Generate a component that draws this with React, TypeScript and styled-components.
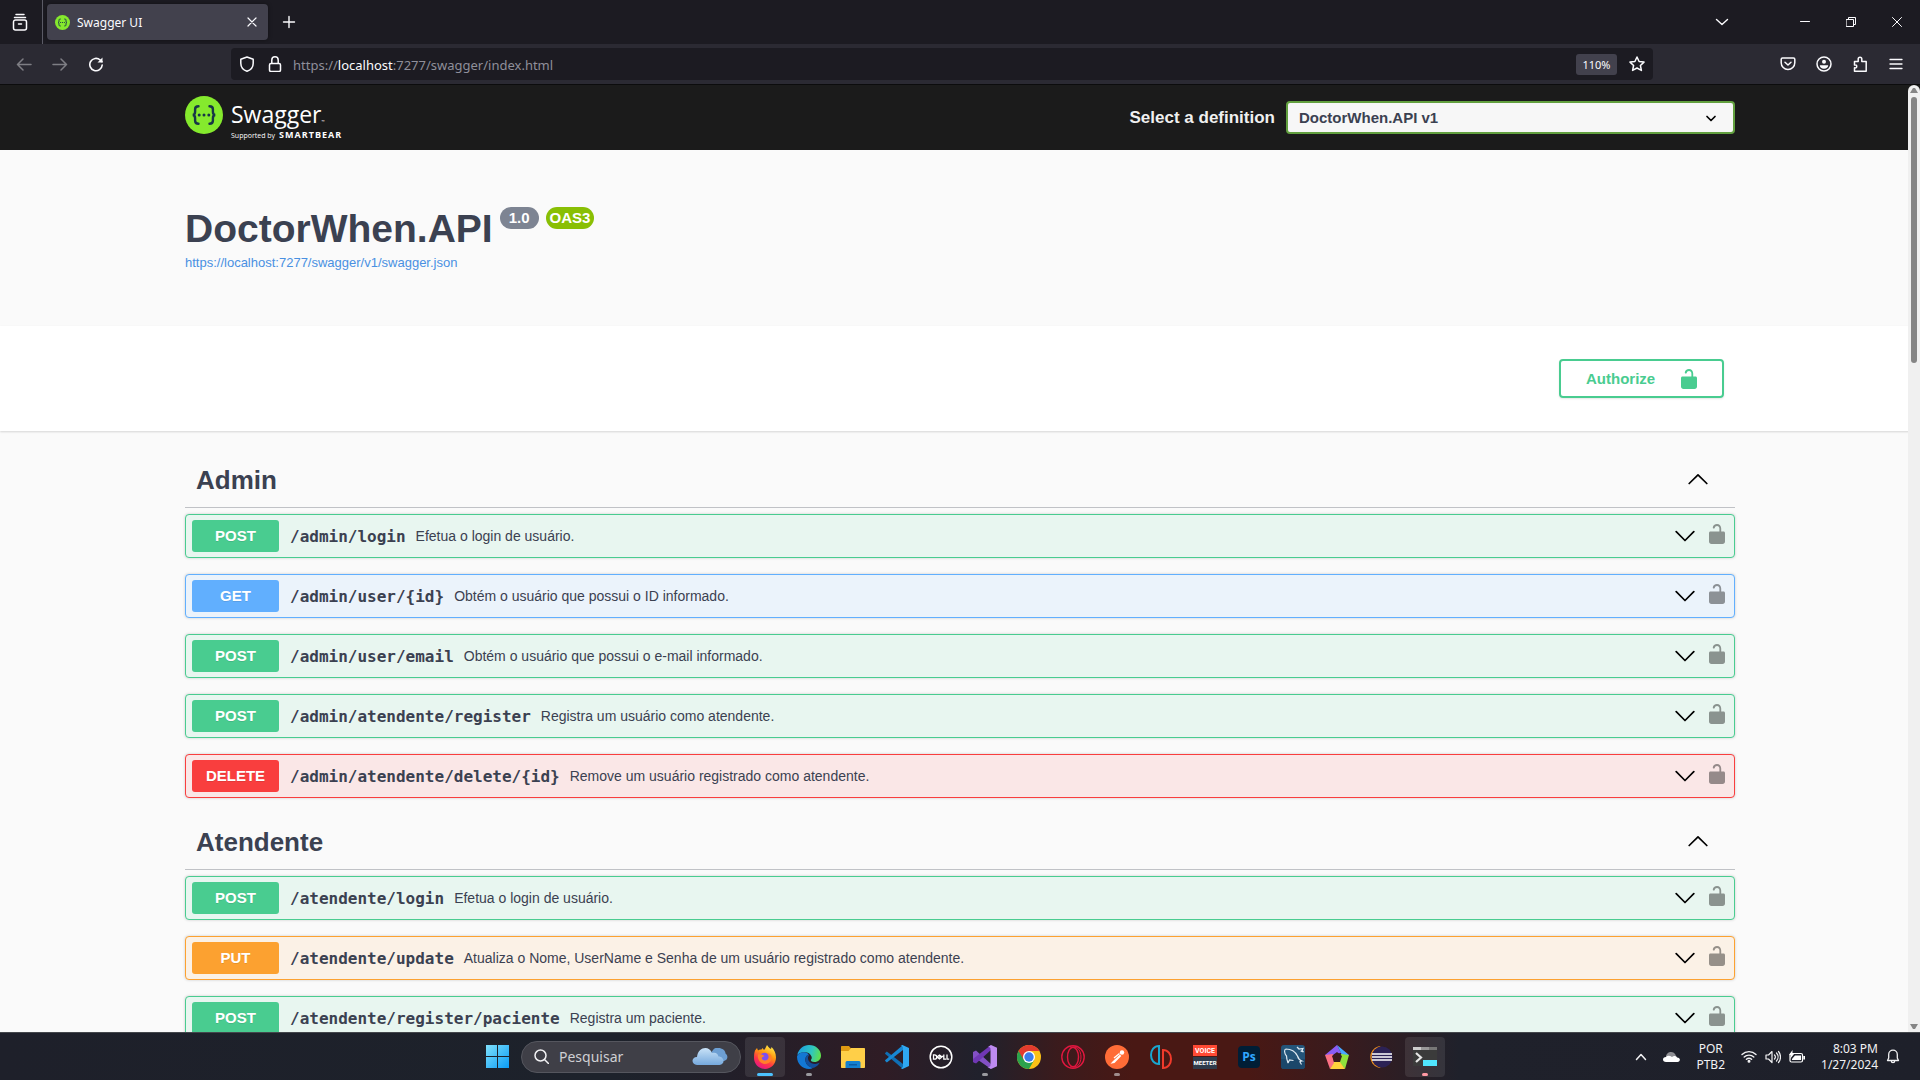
import React from 'react';
import styled, { createGlobalStyle } from 'styled-components';

const sans = '"Liberation Sans", Arial, sans-serif';
const chromeFont = '"Noto Sans", "Open Sans", sans-serif';
const mono = '"DejaVu Sans Mono", monospace';

const Global = createGlobalStyle`
  *, *::before, *::after { box-sizing: border-box; }
  html, body, #root { height: 100%; }
  body { margin: 0; overflow: hidden; background: #fafafa; color: #3b4151; font-family: ${sans}; }
  button { padding: 0; border: 0; background: none; color: inherit; font: inherit; cursor: pointer; }
  h1, h2, p { margin: 0; }
  svg { display: block; flex: none; }
`;

const Screen = styled.div`
  display: flex;
  flex-direction: column;
  height: 100vh;
`;

/* ---------- browser chrome ---------- */

const TabBar = styled.div`
  display: flex;
  align-items: center;
  flex: none;
  height: 44px;
  background: #1c1b22;
  color: #fbfbfe;
  font-family: ${chromeFont};
  font-size: 12px;
`;

const ViewButton = styled.button`
  display: grid;
  place-items: center;
  width: 43px;
  height: 44px;
  padding-right: 2px;
  border-right: 1px solid #5b5b66;
`;

const Tab = styled.div`
  display: flex;
  align-items: center;
  gap: 7px;
  width: 221px;
  height: 36px;
  margin: 0 9px 0 4px;
  padding: 0 4px 0 8px;
  border-radius: 4px;
  background: #42414d;
  box-shadow: 0 0 4px rgba(0, 0, 0, 0.4);
`;

const TabTitle = styled.span`
  flex: 1;
  padding-top: 2px;
  line-height: 16px;
`;

const IconButton = styled.button<{ $w?: number; $dim?: boolean }>`
  display: grid;
  place-items: center;
  width: ${(p) => p.$w ?? 24}px;
  height: 32px;
  opacity: ${(p) => (p.$dim ? 0.4 : 1)};
`;

const Spacer = styled.div`
  flex: 1;
`;

const TabListButton = styled(IconButton)`
  margin-right: 37px;
`;

const Toolbar = styled.div`
  display: flex;
  align-items: center;
  flex: none;
  height: 41px;
  padding: 0 6px;
  border-bottom: 1px solid #0c0c0d;
  background: #2b2a33;
  color: #fbfbfe;
  font-family: ${chromeFont};
`;

const NavGroup = styled.div`
  display: flex;
  width: 225px;
`;

const UrlBar = styled.form`
  display: flex;
  align-items: center;
  flex: 1;
  height: 32px;
  padding: 0 4px 0 2px;
  border-radius: 4px;
  background: #1c1b22;
`;

const Address = styled.a`
  flex: 1;
  margin-left: 4px;
  padding-top: 2px;
  color: #8f8f9a;
  font-size: 13px;
  line-height: 20px;
  text-decoration: none;
  b { color: #fbfbfe; font-weight: 400; }
`;

const ZoomLevel = styled.button`
  width: 41px;
  height: 21px;
  margin-right: 8px;
  border-radius: 3px;
  background: #42414d;
  font-size: 11px;
`;

const ToolGroup = styled.div`
  display: flex;
  justify-content: flex-end;
  width: 261px;
`;

/* ---------- page ---------- */

const Viewport = styled.main`
  position: relative;
  flex: 1;
  min-height: 0;
  overflow: hidden;
  background: #fafafa;
`;

const Wrap = styled.div`
  width: 100%;
  max-width: 1550px;
  margin: 0 auto;
`;

const Topbar = styled.header`
  background: #1b1b1b;
`;

const TopbarInner = styled(Wrap)`
  display: flex;
  align-items: center;
  justify-content: space-between;
  height: 65px;
`;

const BrandLink = styled.a`
  display: flex;
  align-items: flex-start;
  gap: 8px;
  height: 44px;
  color: #fff;
  font-family: "Open Sans", "Noto Sans", sans-serif;
  text-decoration: none;
`;

const BrandWords = styled.span`
  display: flex;
  flex-direction: column;
  padding-top: 3px;
`;

const BrandName = styled.span`
  font-size: 23px;
  line-height: 30px;
  sup { font-size: 4px; line-height: 0; vertical-align: baseline; }
`;

const BrandBy = styled.span`
  display: flex;
  align-items: baseline;
  gap: 4px;
  font-size: 7px;
  line-height: 12px;
  b { font-size: 9px; font-weight: 700; letter-spacing: 1px; }
`;

const Definition = styled.label`
  display: flex;
  align-items: center;
  gap: 11px;
  color: #f0f0f0;
  font-size: 17px;
  font-weight: 700;
`;

const SelectBox = styled.span`
  position: relative;
  display: block;
  svg { position: absolute; right: 18px; top: 14px; pointer-events: none; }
`;

const Select = styled.select`
  display: block;
  width: 449px;
  height: 33px;
  padding: 0 11px;
  border: 2px solid #62a03f;
  border-radius: 4px;
  background: #f7f7f7;
  color: #3b4151;
  font: 700 15px ${sans};
  appearance: none;
`;

const Info = styled(Wrap)`
  padding: 55px 0 53px;
`;

const TitleRow = styled.div`
  display: flex;
  align-items: flex-start;
  gap: 7px;
`;

const Title = styled.h1`
  font-size: 39px;
  line-height: 48px;
`;

const Badge = styled.span<{ $bg: string; $pad: number }>`
  height: 22px;
  margin-top: 2px;
  padding: 0 ${(p) => p.$pad}px;
  border-radius: 11px;
  background: ${(p) => p.$bg};
  color: #fff;
  font-size: 15px;
  font-weight: 700;
  line-height: 22px;
`;

const SpecLink = styled.a`
  display: block;
  color: #4990e2;
  font-size: 13px;
  line-height: 20px;
  text-decoration: none;
`;

const Scheme = styled.section`
  background: #fff;
  box-shadow: 0 1px 2px rgba(0, 0, 0, 0.15);
`;

const SchemeInner = styled(Wrap)`
  display: flex;
  justify-content: flex-end;
  padding: 33px 11px;
`;

const Authorize = styled.button`
  display: flex;
  align-items: center;
  justify-content: space-between;
  width: 165px;
  height: 39px;
  padding: 0 25px;
  border: 2px solid #49cc90;
  border-radius: 4px;
  box-shadow: 0 1px 2px rgba(0, 0, 0, 0.1);
  color: #49cc90;
  font-size: 15px;
  font-weight: 700;
`;

const TagList = styled(Wrap)`
  padding-top: 21px;
`;

const TagSection = styled.section`
  margin-bottom: 16px;
`;

const TagHead = styled.div`
  display: flex;
  align-items: center;
  justify-content: space-between;
  height: 56px;
  margin-bottom: 6px;
  padding: 0 27px 0 11px;
  border-bottom: 1px solid rgba(59, 65, 81, 0.3);
`;

const TagName = styled.h2`
  font-size: 26px;
  line-height: 30px;
`;

const OpList = styled.div`
  display: flex;
  flex-direction: column;
  gap: 16px;
`;

const Operation = styled.div<{ $color: string; $bg: string }>`
  display: flex;
  align-items: center;
  height: 44px;
  padding: 0 9px 0 6px;
  border: 1px solid ${(p) => p.$color};
  border-radius: 4px;
  background: ${(p) => p.$bg};
  box-shadow: 0 0 3px rgba(0, 0, 0, 0.19);
`;

const Method = styled.span<{ $color: string }>`
  width: 87px;
  border-radius: 3px;
  background: ${(p) => p.$color};
  color: #fff;
  font-size: 15px;
  font-weight: 700;
  line-height: 32px;
  text-align: center;
  text-shadow: 0 1px 0 rgba(0, 0, 0, 0.1);
`;

const Path = styled.span`
  padding: 2px 10px 0 11px;
  font-family: ${mono};
  font-size: 16px;
  font-weight: 700;
  line-height: 20px;
`;

const Summary = styled.span`
  flex: 1;
  font-size: 14px;
  line-height: 20px;
`;

const LockButton = styled.button`
  margin-left: 14px;
  padding-bottom: 4px;
  color: #000;
  opacity: 0.4;
`;

const Scrollbar = styled.div`
  position: absolute;
  top: 0;
  right: 0;
  bottom: 0;
  display: flex;
  flex-direction: column;
  align-items: center;
  justify-content: space-between;
  width: 12px;
  padding: 3px 0;
  border-radius: 6px 6px 0 0;
  background: #f0f0f0;
`;

const Thumb = styled.div`
  width: 6px;
  height: 266px;
  margin: 4px 0 auto;
  border-radius: 3px;
  background: #858585;
`;

/* ---------- taskbar ---------- */

const Taskbar = styled.footer`
  position: relative;
  display: flex;
  align-items: center;
  justify-content: center;
  flex: none;
  height: 48px;
  border-top: 1px solid #44474c;
  background: linear-gradient(90deg, #1e202a 0%, #1d222b 32%, #221f29 38%, #2f1c25 46%, #20212c 51%, #3a1b1d 55%, #491814 59%, #491814 65%, #381b1e 70%, #1f212b 76%, #1e202a 100%);
  color: #f2f2f4;
  font-family: ${chromeFont};
`;

const AppRow = styled.nav`
  display: flex;
  align-items: center;
  gap: 4px;
  padding-left: 2px;
`;

const AppButton = styled.button<{ $active?: boolean }>`
  position: relative;
  display: grid;
  place-items: center;
  width: 40px;
  height: 40px;
  border-radius: 4px;
  background: ${(p) => (p.$active ? 'rgba(255, 255, 255, 0.09)' : 'transparent')};
`;

const Running = styled.span<{ $wide?: boolean; $color: string }>`
  position: absolute;
  bottom: 1px;
  left: 50%;
  width: ${(p) => (p.$wide ? 16 : 6)}px;
  height: 3px;
  border-radius: 2px;
  background: ${(p) => p.$color};
  transform: translateX(-50%);
`;

const SearchBox = styled.label`
  display: flex;
  align-items: center;
  gap: 10px;
  width: 220px;
  height: 32px;
  padding: 0 12px;
  border: 1px solid #55565e;
  border-radius: 16px;
  background: #3f3f47;
`;

const SearchInput = styled.input`
  flex: 1;
  min-width: 0;
  padding: 0;
  border: 0;
  outline: 0;
  background: none;
  color: #fff;
  font: 14px ${chromeFont};
  &::placeholder { color: #cfcfd3; opacity: 1; }
`;

const Tray = styled.div`
  position: absolute;
  right: 14px;
  top: 0;
  bottom: 0;
  display: flex;
  align-items: center;
`;

const TrayText = styled.span<{ $right?: boolean }>`
  font-size: 12px;
  line-height: 16px;
  text-align: ${(p) => (p.$right ? 'right' : 'center')};
  white-space: pre-line;
`;

const TrayIcons = styled.div<{ $gap: number; $mx: number }>`
  display: flex;
  align-items: center;
  gap: ${(p) => p.$gap}px;
  margin: 0 ${(p) => p.$mx}px;
`;

/* ---------- drawings ---------- */

const Line = ({ w = 16, h = 16, vb, sw = 1.5, children }: { w?: number; h?: number; vb?: string; sw?: number; children: React.ReactNode }) => (
  <svg width={w} height={h} viewBox={vb ?? `0 0 ${w} ${h}`} fill="none" stroke="currentColor" strokeWidth={sw} strokeLinecap="round" strokeLinejoin="round">
    {children}
  </svg>
);

const BraceMark = ({ size }: { size: number }) => (
  <svg width={size} height={size} viewBox="0 0 38 38">
    <circle cx="19" cy="19" r="19" fill="#85ea2d" />
    <g fill="none" stroke="#173647" strokeWidth="2.4" strokeLinecap="round">
      <path d="M13.5 10.2c-2.6 0-3.4 1-3.4 3v2.6c0 2-.6 3-2.3 3.2 1.7.2 2.3 1.2 2.3 3.2v2.6c0 2 .8 3 3.4 3" />
      <path d="M24.5 10.2c2.6 0 3.4 1 3.4 3v2.6c0 2 .6 3 2.3 3.2-1.7.2-2.3 1.2-2.3 3.2v2.6c0 2-.8 3-3.4 3" />
    </g>
    <g fill="#173647">
      <circle cx="14.2" cy="19" r="1.5" />
      <circle cx="19" cy="19" r="1.5" />
      <circle cx="23.8" cy="19" r="1.5" />
    </g>
  </svg>
);

const LockOpen = () => (
  <svg width="16" height="20" viewBox="0 0 16 20" fill="currentColor">
    <path d="M12.2 7.500V4.600C12.2 2 10.500 0 8 0 5.700 0 4 1.500 3.800 3.500c0 .6.3 1 1 1s.9-.3 1-.8C6 2.600 6.800 1.900 8 1.900c1.500 0 2.400 1 2.400 2.700v2.900H1.500C.6 7.500 0 8.100 0 9v8.500C0 19 1 20 2.500 20h11c1.500 0 2.500-1 2.500-2.500V9c0-.9-.6-1.500-1.500-1.500z" />
  </svg>
);

const ChevronDown = () => (
  <Line w={20} h={12} sw={1.7}><path d="M1.200 1.700 10 10.500l8.800-8.800" stroke="#000" /></Line>
);
const ChevronUp = () => (
  <Line w={20} h={12} sw={1.7}><path d="M1.200 9.500 10 .9l8.800 8.600" stroke="#000" /></Line>
);

const FirefoxIcon = () => (
  <svg width="24" height="24" viewBox="0 0 24 24">
    <defs>
      <linearGradient id="ff" x1="0.8" y1="0" x2="0.3" y2="1">
        <stop offset="0" stopColor="#fff44f" /><stop offset="0.4" stopColor="#ff980e" /><stop offset="0.7" stopColor="#ff3647" /><stop offset="1" stopColor="#e31587" />
      </linearGradient>
    </defs>
    <path d="M2 5.500 4 3l1 2.500C6 4.600 7 4.300 8.500 4.500L9.500 3l1.500 2c1-.8 1.700-2.500 3-5 1.200 1.700 2 3 4 4l.5-2c2.500 2.500 4.500 6 4.500 10.500C23 19 18 24 12 24S1 19 1 13c0-3 .2-5 1-7.500z" fill="url(#ff)" />
    <circle cx="11.500" cy="12.500" r="4.800" fill="#7d4ff0" />
    <path d="M5 9.500c2-.6 4.500 0 6.500 1.500L9 12.500c-1 2.500 3 4 5.500 2 2-2 1-5-1-6.500 4 0 6 3 5 6.500-1 3-4 4.500-7 4.500-4-.5-7.500-4-6.500-9.500z" fill="#ff7f2a" />
  </svg>
);

const EdgeIcon = () => (
  <svg width="24" height="24" viewBox="0 0 24 24">
    <defs>
      <linearGradient id="eg" x1="0" y1="0.3" x2="1" y2="0.5"><stop offset="0" stopColor="#1b9de2" /><stop offset="0.6" stopColor="#2fc6c0" /><stop offset="1" stopColor="#5fe04c" /></linearGradient>
    </defs>
    <path d="M.3 10C1.500 4 6.500 0 12 0c7 0 12 5 12 10.500 0 4-3 6.500-6.500 6.500-3 0-4-1.300-3.500-2.300.8-1 1-2 .5-3.300C13.500 8.500 10.500 7 7.500 7.200 4 7.300 1.500 8.500.3 10z" fill="url(#eg)" />
    <path d="M.1 11C1.500 8 5 7 7.500 7.300c2 .2 3.500 1 4.200 2.200C9 10.500 8 13 8.500 16c.7 4 4 6.500 8 6.500C15 23.500 13.500 24 12 24 5 24-.5 18.500.1 11z" fill="#1378d4" />
    <path d="M11.500 9.500C9 10.500 8 13 8.500 16c.7 4 4 7 8.500 6.800 2.500-1 4.500-2.800 5.700-5-3.200 1.700-8.500 1.700-11-2-1-2-1.200-4 .8-6z" fill="#124f9c" />
  </svg>
);

const FolderIcon = () => (
  <svg width="24" height="22" viewBox="0 0 24 22">
    <path d="M0 1c0-.6.4-1 1-1h7l2 2.500L8 6H0z" fill="#e09a12" />
    <path d="M0 5h7.500L10 2h13c.6 0 1 .4 1 1v18c0 .6-.4 1-1 1H1c-.6 0-1-.4-1-1z" fill="#ffcf48" />
    <path d="M4.500 22v-5c0-1.400.8-2 2-2h11c1.200 0 2 .6 2 2v5z" fill="#1380cf" />
    <path d="M8 18h8v1.500H8z" fill="#0a5ba5" />
  </svg>
);

const CodeIcon = () => (
  <svg width="24" height="24" viewBox="0 0 24 24">
    <path d="m0 8.200 1.800-1.600L18 19v5L.3 9z" fill="#0f6fb5" />
    <path d="M0 15.800 1.800 17.400 18 5V0L.3 15z" fill="#1888d3" />
    <path d="M17.500 0 24 3v18l-6.500 3-2-1c1.500 0 2.500-.5 2.500-2V3c0-1.500-1-2-2.500-2z" fill="#2fa8f2" />
  </svg>
);

const DellIcon = () => (
  <svg width="24" height="24" viewBox="0 0 24 24" fill="none" stroke="#fff" strokeWidth="1.5">
    <circle cx="12" cy="12" r="10.8" />
    <path d="M4.500 9.800v4.400h1c3 0 3-4.400 0-4.400zM8 12l2.500-2 2 1.500M8 12l2.500 2 3.500-3M9.500 12.800l2.500-2M14.800 9.500v4.700H17M18 9.500v4.700h2.200" strokeWidth="1.3" />
  </svg>
);

const StudioIcon = () => (
  <svg width="24" height="24" viewBox="0 0 24 24">
    <path d="m0 7 3-1.500L18 19v5L3 13.500V18l-3-1z" fill="#8350c4" />
    <path d="M0 17l3 1.500L18 5V0L0 14z" fill="#7037b4" />
    <path d="M18 0l6 2.700v18.600L18 24l-3.500-2c2 0 3-.5 3-2V4c0-1.500-1-2-2.500-2z" fill="#bd8bf0" />
  </svg>
);

const ChromeIcon = () => (
  <svg width="24" height="24" viewBox="0 0 24 24">
    <circle cx="12" cy="12" r="12" fill="#fbc116" />
    <path d="M12 12 1.600 6A12 12 0 0 0 12 24l5.200-9z" fill="#2ba24c" />
    <path d="M1.600 6A12 12 0 0 1 22.400 6H12v6l-5.200 3z" fill="#e33b2e" />
    <circle cx="12" cy="12" r="6" fill="#fff" /><circle cx="12" cy="12" r="4.7" fill="#3a7cec" />
  </svg>
);

const OperaIcon = () => (
  <svg width="24" height="24" viewBox="0 0 24 24" fill="none" stroke="#e0173f" strokeWidth="1.4">
    <circle cx="12" cy="12" r="11.2" /><ellipse cx="12" cy="12" rx="5.5" ry="9.8" /><path d="M9 3.500c6-4 11 1 11 8.500s-5 12.500-11 8.500" strokeWidth="1" />
  </svg>
);

const PostmanIcon = () => (
  <svg width="24" height="24" viewBox="0 0 24 24">
    <circle cx="12" cy="12" r="12" fill="#ff6c37" />
    <path d="M15 9.500 8 16l-2.500 2.800L9.500 18l6.800-7z" fill="#fff" /><circle cx="17" cy="7.5" r="2.2" fill="#fff" />
    <path d="m9 13 5.500-4.500" stroke="#fff" strokeWidth="1.3" />
  </svg>
);

const SplitIcon = () => (
  <svg width="22" height="24" viewBox="0 0 22 24" fill="none" strokeWidth="2">
    <path d="M9 1v18C4 19 1 15 1 10S4 1 9 1z" stroke="#19a6cf" /><path d="M13 5v18c5 0 8-4 8-9s-3-9-8-9z" stroke="#f03a2b" />
  </svg>
);

const MeterIcon = () => (
  <svg width="24" height="24" viewBox="0 0 24 24" fontFamily="Roboto, sans-serif" fontWeight="700" fontSize="7" fill="#fff" textAnchor="middle">
    <rect width="24" height="11" fill="#ff4a34" /><rect y="12" width="24" height="12" fill="#2f3c4c" />
    <text x="12" y="8">VOICE</text><text x="12" y="20" fontSize="6">MEETER</text>
  </svg>
);

const PhotoIcon = () => (
  <svg width="22" height="22" viewBox="0 0 22 22">
    <rect width="22" height="22" rx="4" fill="#001e36" />
    <text x="11" y="15" fontFamily="Open Sans, sans-serif" fontWeight="700" fontSize="12" fill="#31a8ff" textAnchor="middle">Ps</text>
  </svg>
);

const DolphinIcon = () => (
  <svg width="24" height="24" viewBox="0 0 24 24">
    <rect width="24" height="24" rx="3" fill="#245579" /><path d="M0 14h24v7a3 3 0 0 1-3 3H3a3 3 0 0 1-3-3z" fill="#1b476a" />
    <path d="M7 18c-1-3-1.500-5-1.500-7C3 8 3 4.500 5 4c5 0 9 2 11.500 7 .7 2.500 1.500 4 4.500 5-1.500.3-2.300.5-2 1l1.500 2.500M7 18l1.500-3 4 .5M16 2l2 2 4-.5-1 2 1.500 1.500-3-1" fill="none" stroke="#dfeaf2" strokeWidth="1.2" />
  </svg>
);

const GemIcon = () => (
  <svg width="24" height="24" viewBox="0 0 24 24">
    <path d="M12 0 16 8 9 9 8 12 0 10z" fill="#8a5cf5" /><path d="m12 0 12 10-6 3-2-5z" fill="#46a6ff" />
    <path d="m24 10-4 14-6-7 2-8z" fill="#8fe23c" /><path d="M20 24H5l3-7h7z" fill="#ffd23c" /><path d="m5 24-5-14 8-1 1 9z" fill="#fb7185" />
    <path d="m12 7 5 4-2 6H9l-2-6z" fill="#3a1b1d" />
  </svg>
);

const EclipseIcon = () => (
  <svg width="24" height="22" viewBox="0 0 24 22">
    <path d="M9 .5A11 11 0 0 0 9 21.500L12 22A12 12 0 0 1 12 0z" fill="#f7941e" /><circle cx="13" cy="11" r="10.5" fill="#2c2255" />
    <path d="M3 8h20M3 11h20M3 14h20" stroke="#fff" strokeWidth="1.6" />
  </svg>
);

const TerminalIcon = () => (
  <svg width="24" height="20" viewBox="0 0 24 20">
    <rect width="24" height="19" fill="#3b3b3b" /><path d="M0 0h8v3H0z" fill="#ccc" /><path d="M8 0h8v3H8z" fill="#999" /><path d="M16 0h8v3h-8z" fill="#777" />
    <path d="m3 6 5 4.500L3 15" fill="none" stroke="#e6e6e6" strokeWidth="2.2" /><rect x="10" y="13" width="14" height="6" fill="#50e6ff" />
  </svg>
);

const StartIcon = () => (
  <svg width="23" height="23" viewBox="0 0 23 23">
    <defs><linearGradient id="win" x1="0" y1="0" x2="1" y2="1"><stop offset="0" stopColor="#7fe0fb" /><stop offset="1" stopColor="#0a9bf5" /></linearGradient></defs>
    <path d="M0 0h11v11H0zM12 0h11v11H12zM0 12h11v11H0zM12 12h11v11H12z" fill="url(#win)" />
  </svg>
);

const CloudsIcon = () => (
  <svg width="36" height="18" viewBox="0 0 36 18">
    <defs><linearGradient id="cl" x1="0" y1="0" x2="0" y2="1"><stop offset="0" stopColor="#c9e2f7" /><stop offset="1" stopColor="#76a9dd" /></linearGradient></defs>
    <path d="M20 9a6.500 6.500 0 0 1 9-8.500c3 .5 4.500 3 4.500 5C36 7 36.500 12 32 13H22z" fill="#6d9fd3" />
    <path d="M5 17c-6-.5-6-8 0-8C6-1 17-3 20 5c3-1 6 0 6.500 3.500 6 0 7 8 1 8.500z" fill="url(#cl)" />
  </svg>
);

/* ---------- data ---------- */

type Verb = 'POST' | 'GET' | 'DELETE' | 'PUT';

const palette: Record<Verb, { color: string; bg: string }> = {
  POST: { color: '#49cc90', bg: '#e8f6f0' },
  GET: { color: '#61affe', bg: '#ebf3fb' },
  DELETE: { color: '#f93e3e', bg: '#fae7e7' },
  PUT: { color: '#fca130', bg: '#fbf1e6' },
};

const tags: { name: string; ops: [Verb, string, string][] }[] = [
  {
    name: 'Admin',
    ops: [
      ['POST', '/admin/login', 'Efetua o login de usuário.'],
      ['GET', '/admin/user/{id}', 'Obtém o usuário que possui o ID informado.'],
      ['POST', '/admin/user/email', 'Obtém o usuário que possui o e-mail informado.'],
      ['POST', '/admin/atendente/register', 'Registra um usuário como atendente.'],
      ['DELETE', '/admin/atendente/delete/{id}', 'Remove um usuário registrado como atendente.'],
    ],
  },
  {
    name: 'Atendente',
    ops: [
      ['POST', '/atendente/login', 'Efetua o login de usuário.'],
      ['PUT', '/atendente/update', 'Atualiza o Nome, UserName e Senha de um usuário registrado como atendente.'],
      ['POST', '/atendente/register/paciente', 'Registra um paciente.'],
    ],
  },
];

const apps: { name: string; icon: React.ReactNode; dot?: string; wide?: boolean; active?: boolean }[] = [
  { name: 'Firefox', icon: <FirefoxIcon />, dot: '#4cc2ff', wide: true, active: true },
  { name: 'Edge', icon: <EdgeIcon />, dot: '#9a9a9f' },
  { name: 'Explorer', icon: <FolderIcon /> },
  { name: 'VS Code', icon: <CodeIcon /> },
  { name: 'Dell', icon: <DellIcon /> },
  { name: 'Visual Studio', icon: <StudioIcon />, dot: '#9a9a9f' },
  { name: 'Chrome', icon: <ChromeIcon /> },
  { name: 'Opera', icon: <OperaIcon /> },
  { name: 'Postman', icon: <PostmanIcon />, dot: '#a08c8c' },
  { name: 'Emulator', icon: <SplitIcon /> },
  { name: 'Voicemeeter', icon: <MeterIcon /> },
  { name: 'Photoshop', icon: <PhotoIcon /> },
  { name: 'MySQL Workbench', icon: <DolphinIcon /> },
  { name: 'Gem', icon: <GemIcon /> },
  { name: 'Eclipse', icon: <EclipseIcon /> },
  { name: 'Terminal', icon: <TerminalIcon />, dot: '#ff99a4', active: true },
];

const Browser = () => (
  <>
    <TabBar>
      <ViewButton aria-label="Firefox View">
        <Line w={16} h={18}><path d="M4 1.500h8M2.500 4.500h11M3.500 7h9a2 2 0 0 1 2 2v6a2 2 0 0 1-2 2h-9a2 2 0 0 1-2-2V9a2 2 0 0 1 2-2zM6.500 11h3" /></Line>
      </ViewButton>
      <Tab>
        <BraceMark size={15} />
        <TabTitle>Swagger UI</TabTitle>
        <IconButton aria-label="Close tab"><Line w={10} h={10} sw={1.2}><path d="m1 1 8 8M9 1 1 9" /></Line></IconButton>
      </Tab>
      <IconButton aria-label="New tab"><Line w={14} h={14} sw={1.4}><path d="M7 1.500v11M1.500 7h11" /></Line></IconButton>
      <Spacer />
      <TabListButton $w={46} aria-label="List all tabs"><Line w={14} h={8} sw={1.4}><path d="m1.500 1.500 5.500 5 5.500-5" /></Line></TabListButton>
      <IconButton $w={46} aria-label="Minimize"><Line w={10} h={10} sw={1}><path d="M.5 4.500h9" /></Line></IconButton>
      <IconButton $w={46} aria-label="Restore"><Line w={10} h={10} sw={1}><path d="M.5 2.500h7v7h-7zM2.500 2.500v-2h7v7h-2" /></Line></IconButton>
      <IconButton $w={46} aria-label="Close"><Line w={10} h={10} sw={1}><path d="m.5.5 9 9M9.500.5l-9 9" /></Line></IconButton>
    </TabBar>
    <Toolbar>
      <NavGroup>
        <IconButton $w={36} $dim aria-label="Back"><Line w={16} h={14}><path d="M15 7.500H1.500M7 2 1.500 7.500 7 13" /></Line></IconButton>
        <IconButton $w={36} $dim aria-label="Forward"><Line w={16} h={14}><path d="M1 7.500h13.500M9 2l5.500 5.500L9 13" /></Line></IconButton>
        <IconButton $w={36} aria-label="Reload"><Line sw={1.6}><path d="M14.200 9a6.200 6.200 0 1 1-2-5l1.800 1.800" /><path d="M14.500 1.500v5h-5z" fill="currentColor" stroke="none" /></Line></IconButton>
      </NavGroup>
      <UrlBar onSubmit={(e) => e.preventDefault()}>
        <IconButton $w={28} type="button" aria-label="Tracking protection"><Line><path d="M8 1 14.200 3.200v4C14.200 11 11.500 14 8 15.300 4.500 14 1.800 11 1.800 7.200v-4z" /></Line></IconButton>
        <IconButton $w={28} type="button" aria-label="Connection secure"><Line><rect x="2.500" y="7.500" width="11" height="8" rx="1.500" /><path d="M4.800 7V4a3.200 3.200 0 0 1 6.400 0v3" /></Line></IconButton>
        <Address href="#">https://<b>localhost</b>:7277/swagger/index.html</Address>
        <ZoomLevel type="button">110%</ZoomLevel>
        <IconButton type="button" aria-label="Bookmark"><Line><path d="m8 1 2.100 4.500 4.900.6-3.600 3.400 1 4.900L8 12l-4.400 2.400 1-4.900L1 6.100l4.900-.6z" /></Line></IconButton>
      </UrlBar>
      <ToolGroup>
        <IconButton $w={36} aria-label="Pocket"><Line><path d="M2.500 2h11c.8 0 1.300.5 1.300 1.300v3.400a6.800 6.800 0 0 1-13.600 0V3.300C1.200 2.500 1.700 2 2.500 2zM5 6.300 8 9l3-2.700" /></Line></IconButton>
        <IconButton $w={36} aria-label="Account"><Line><circle cx="8" cy="8" r="7" /><circle cx="8" cy="5.8" r="2" fill="currentColor" stroke="none" /><path d="M3.800 9.300h8.400c0 2-1.800 3.400-4.200 3.400s-4.200-1.400-4.200-3.400z" fill="currentColor" stroke="none" /></Line></IconButton>
        <IconButton $w={36} aria-label="Extensions"><Line><path d="M2.500 15.200v-3.400c3 .8 3-3.600 0-2.800V5.500h3.700V3a1.700 1.700 0 0 1 3.600 0v2.500h4.400v9.700z" /></Line></IconButton>
        <IconButton $w={36} aria-label="Menu"><Line w={14} h={12} sw={1.3}><path d="M1 1.500h12M1 6h12M1 10.500h12" /></Line></IconButton>
      </ToolGroup>
    </Toolbar>
  </>
);

export default function App() {
  return (
    <Screen>
      <Global />
      <Browser />
      <Viewport>
        <Topbar>
          <TopbarInner>
            <BrandLink href="#" aria-label="Swagger">
              <BraceMark size={38} />
              <BrandWords>
                <BrandName>Swagger<sup>™</sup></BrandName>
                <BrandBy>Supported by <b>SMARTBEAR</b></BrandBy>
              </BrandWords>
            </BrandLink>
            <Definition>
              Select a definition
              <SelectBox>
                <Select defaultValue="v1"><option value="v1">DoctorWhen.API v1</option></Select>
                <Line w={12} h={8} sw={1.7}><path d="m2 1.500 4 4 4-4" stroke="#000" /></Line>
              </SelectBox>
            </Definition>
          </TopbarInner>
        </Topbar>
        <Info>
          <TitleRow>
            <Title>DoctorWhen.API</Title>
            <Badge $bg="#7d8492" $pad={9}>1.0</Badge>
            <Badge $bg="#89bf04" $pad={4}>OAS3</Badge>
          </TitleRow>
          <SpecLink href="#">https://localhost:7277/swagger/v1/swagger.json</SpecLink>
        </Info>
        <Scheme>
          <SchemeInner>
            <Authorize>Authorize<LockOpen /></Authorize>
          </SchemeInner>
        </Scheme>
        <TagList>
          {tags.map((tag) => (
            <TagSection key={tag.name}>
              <TagHead>
                <TagName>{tag.name}</TagName>
                <button aria-label={`Collapse ${tag.name}`}><ChevronUp /></button>
              </TagHead>
              <OpList>
                {tag.ops.map(([verb, path, summary]) => (
                  <Operation key={verb + path} $color={palette[verb].color} $bg={palette[verb].bg}>
                    <Method $color={palette[verb].color}>{verb}</Method>
                    <Path>{path}</Path>
                    <Summary>{summary}</Summary>
                    <button aria-label={`Expand ${path}`}><ChevronDown /></button>
                    <LockButton aria-label={`Authorize ${path}`}><LockOpen /></LockButton>
                  </Operation>
                ))}
              </OpList>
            </TagSection>
          ))}
        </TagList>
        <Scrollbar>
          <svg width="8" height="5" viewBox="0 0 8 5"><path d="M0 5 3 0h2l3 5z" fill="#858585" /></svg>
          <Thumb />
          <svg width="8" height="5" viewBox="0 0 8 5"><path d="m0 0 3 5h2l3-5z" fill="#858585" /></svg>
        </Scrollbar>
      </Viewport>
      <Taskbar>
        <AppRow>
          <AppButton aria-label="Start"><StartIcon /></AppButton>
          <SearchBox>
            <Line w={15} h={15}><circle cx="6.5" cy="6.5" r="5.5" /><path d="m10.500 10.500 4 4" /></Line>
            <SearchInput placeholder="Pesquisar" aria-label="Pesquisar" />
            <CloudsIcon />
          </SearchBox>
          {apps.map((app) => (
            <AppButton key={app.name} aria-label={app.name} $active={app.active}>
              {app.icon}
              {app.dot && <Running $color={app.dot} $wide={app.wide} />}
            </AppButton>
          ))}
        </AppRow>
        <Tray>
          <Line w={12} h={8}><path d="m1.500 6.500 4.500-5 4.500 5" /></Line>
          <TrayIcons $gap={0} $mx={16}>
            <svg width="17" height="11" viewBox="0 0 17 11"><path d="M3 7a5 5 0 0 1 10-2l2 3z" fill="#8f8f94" /><path d="M3 11c-4 0-4-5 0-5 2-2 4-1 6 0 2-1.500 4-1 5 .5 4 0 3.500 4.500.5 4.500z" fill="#fff" /></svg>
          </TrayIcons>
          <TrayText>{'POR\nPTB2'}</TrayText>
          <TrayIcons $gap={8} $mx={16}>
            <Line w={16} h={13} sw={1.4}><path d="M1 4.500a10 10 0 0 1 14 0M3.200 7a7 7 0 0 1 9.600 0M5.400 9.300a4 4 0 0 1 5.200 0" /><circle cx="8" cy="11.2" r=".8" fill="currentColor" /></Line>
            <Line w={16} h={14} sw={1.2}><path d="M1 5v4h2.500L7 12.500v-11L3.500 5zM9.500 5a3 3 0 0 1 0 4M11.500 3a6 6 0 0 1 0 8M13.500 1.500a8.500 8.500 0 0 1 0 11" /></Line>
            <svg width="16" height="13" viewBox="0 0 16 13"><rect x="1" y="3.5" width="12.5" height="8.5" rx="1.5" fill="none" stroke="#fff" strokeWidth="1.2" /><path d="M6 5.500h6v4.500H3V9zM14.300 6H16v3.500h-1.700z" fill="#fff" /><path d="M3.500 0 0 5h2L1 9l4.500-5.500H3.500z" fill="#fff" /></svg>
          </TrayIcons>
          <TrayText $right>{'8:03 PM\n1/27/2024'}</TrayText>
          <Line w={28} h={16} sw={1.3}><path d="M9.500 11.500 10.700 9V5.500a4.300 4.300 0 0 1 8.600 0V9l1.200 2.500zM13.300 12a1.700 1.700 0 0 0 3.400 0" /></Line>
        </Tray>
      </Taskbar>
    </Screen>
  );
}
